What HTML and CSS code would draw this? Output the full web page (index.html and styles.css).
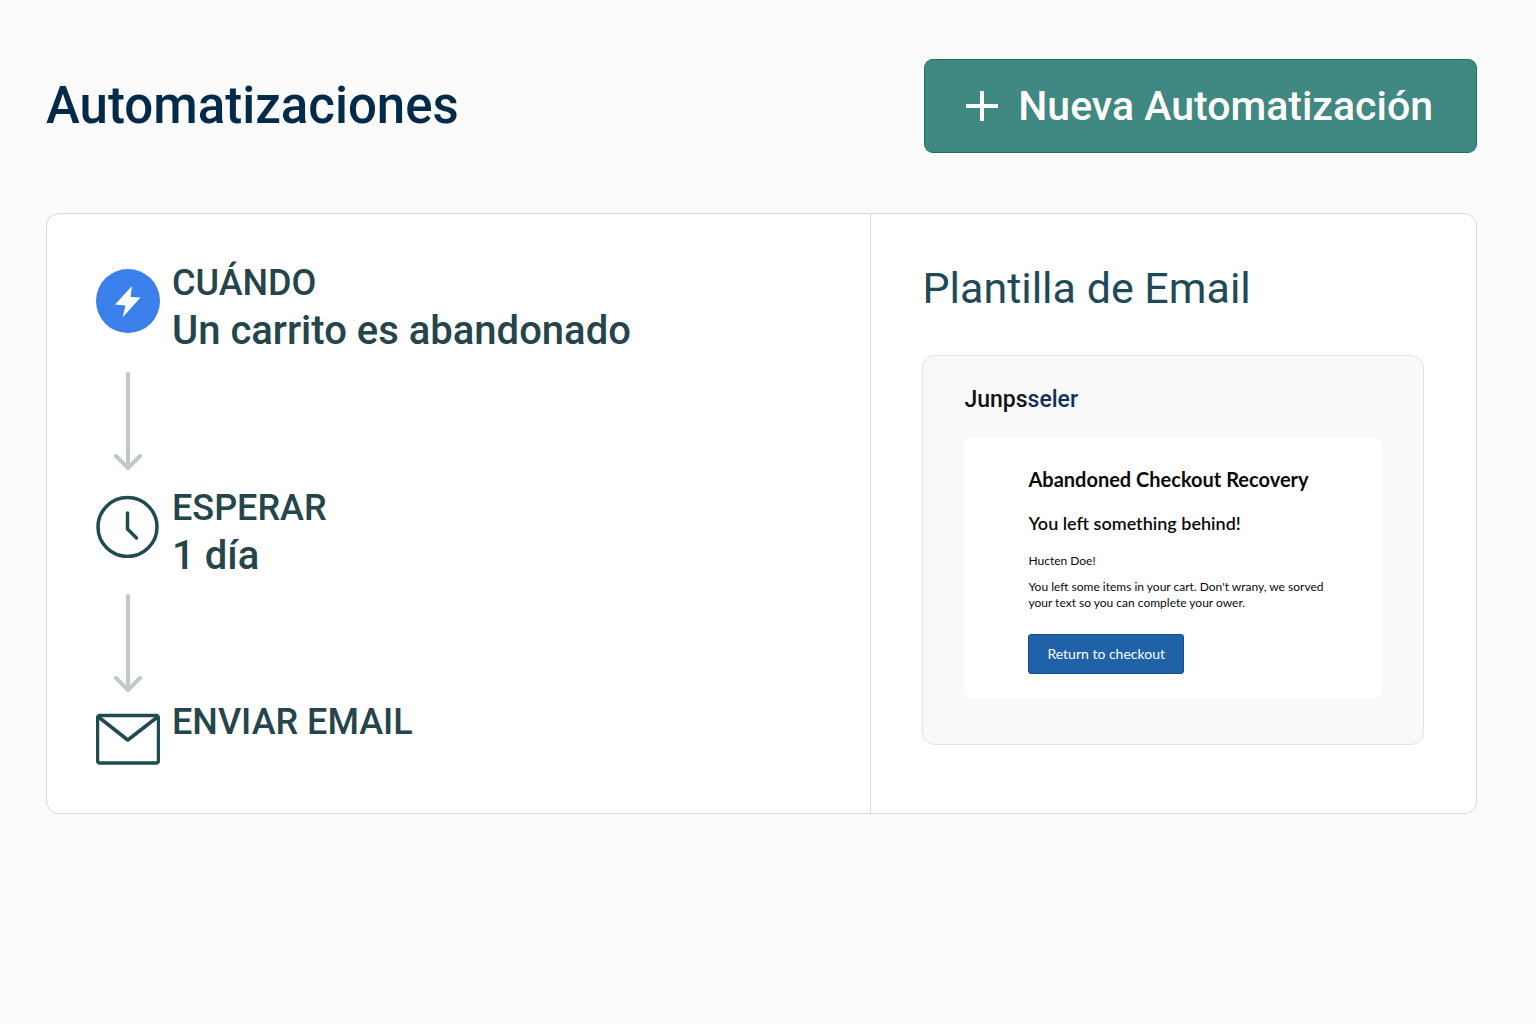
FILE: index.html
```html
<!DOCTYPE html>
<html lang="es">
  <head>
    <meta charset="utf-8" />
    <title>Automatizaciones</title>
    <meta name="viewport" content="width=device-width, initial-scale=1" />
    <link rel="stylesheet" href="styles.css">
  </head>

  <body>
    <header class="page-header">
      <h1>Automatizaciones</h1>
      <button type="button" class="new-button">
        <svg class="plus" viewBox="0 0 32 32" aria-hidden="true">
          <path d="M16 1v30M0 16h32" />
        </svg>
        Nueva Automatización
      </button>
    </header>

    <main class="board">
      <section class="flow">
        <div class="step">
          <svg class="step-icon" viewBox="0 0 64 64" aria-hidden="true">
            <circle class="trigger-bg" cx="32" cy="32" r="32" />
            <path class="trigger-bolt" d="M36 17L19 35.500L29.500 36.500L26.500 48.500L44.500 28.500L34.500 28Z" />
          </svg>
          <div class="step-text">
            <h2>CUÁNDO</h2>
            <p>Un carrito es abandonado</p>
          </div>
        </div>

        <svg class="arrow" viewBox="0 0 64 98" aria-hidden="true">
          <path d="M32 2v93M20 84l12 12 12-12" />
        </svg>

        <div class="step">
          <svg class="step-icon line-icon" viewBox="0 0 64 64" aria-hidden="true">
            <circle cx="31.500" cy="33" r="29.500" />
            <path d="M31.500 19v16l9 9" />
          </svg>
          <div class="step-text">
            <h2>ESPERAR</h2>
            <p>1 día</p>
          </div>
        </div>

        <svg class="arrow arrow-last" viewBox="0 0 64 98" aria-hidden="true">
          <path d="M32 2v93M20 84l12 12 12-12" />
        </svg>

        <div class="step">
          <svg class="step-icon line-icon" viewBox="0 0 64 64" aria-hidden="true">
            <rect x="1.500" y="7.500" width="61" height="47.500" rx="2.500" />
            <path d="M2.500 9L31.800 32L61.500 9" />
          </svg>
          <div class="step-text">
            <h2>ENVIAR EMAIL</h2>
          </div>
        </div>
      </section>

      <section class="template">
        <h2>Plantilla de Email</h2>
        <div class="preview">
          <div class="brand">Junps<span>seler</span></div>
          <article class="mail">
            <h3>Abandoned Checkout Recovery</h3>
            <h4>You left something behind!</h4>
            <p>Hucten Doe!</p>
            <p>
              You left some items in your cart. Don't wrany, we sorved<br />
              your text so you can complete your ower.
            </p>
            <a class="mail-button" href="#">Return to checkout</a>
          </article>
        </div>
      </section>
    </main>
  </body>
</html>
```
FILE: styles.css
```css
* {
  box-sizing: border-box;
}

body {
  margin: 0;
  padding: 59px 59px 59px 46px;
  background: #fbfbfb;
  color: #24454b;
  font-family: Roboto, "Liberation Sans", sans-serif;
}

h1,
h2,
h3,
h4,
p {
  margin: 0;
}

/* Header */

.page-header {
  display: flex;
  align-items: center;
  justify-content: space-between;
  margin-bottom: 60px;
}

.page-header h1 {
  color: #042a4a;
  font-size: 51px;
  font-weight: 500;
  line-height: 60px;
}

.new-button {
  display: flex;
  align-items: center;
  gap: 20px;
  padding: 22px 43px 22px 41px;
  border: 1px solid #1d7268;
  border-radius: 9px;
  background: #408882;
  color: #fff;
  font-family: inherit;
  font-size: 41px;
  font-weight: 500;
  line-height: 48px;
}

.plus {
  width: 32px;
  height: 32px;
  fill: none;
  stroke: #fff;
  stroke-width: 4;
}

/* Board */

.board {
  display: grid;
  grid-template-columns: minmax(0, 824fr) minmax(0, 606fr);
  border: 1px solid #d8dada;
  border-radius: 13px;
  background: #fff;
}

.flow {
  padding: 45px 49px 40px;
}

.step {
  display: flex;
  align-items: flex-start;
  gap: 12px;
}

.step-icon {
  flex: none;
  width: 64px;
  height: 64px;
  margin-top: 10px;
}

.trigger-bg {
  fill: #3b80ea;
}

.trigger-bolt {
  fill: #fff;
}

.line-icon {
  fill: none;
  stroke: #214b52;
  stroke-width: 3.5;
  stroke-linecap: round;
  stroke-linejoin: round;
}

.step h2,
.step p {
  font-weight: 500;
  line-height: 48px;
}

.step h2 {
  font-size: 36px;
}

.step p {
  font-size: 40px;
}

.arrow {
  display: block;
  width: 64px;
  height: 98px;
  margin: 17px 0 14px;
  fill: none;
  stroke: #bfc9ca;
  stroke-width: 4;
  stroke-linecap: round;
  stroke-linejoin: round;
}

.arrow-last {
  margin: 14px 0 6px;
}

/* Email template */

.template {
  padding: 48px 52px 68px 51px;
  border-left: 1px solid #d8dada;
}

.template h2 {
  margin-bottom: 41px;
  color: #20495a;
  font-size: 43px;
  font-weight: 400;
  line-height: 52px;
}

.preview {
  padding: 30px 41px 46px;
  border: 1px solid #e2e3e3;
  border-radius: 13px;
  background: #f9f9f9;
}

.brand {
  margin-bottom: 24px;
  color: #111;
  font-size: 23px;
  font-weight: 500;
  line-height: 28px;
}

.brand span {
  color: #11305f;
}

.mail {
  padding: 28px 64px 24px;
  border-radius: 8px;
  background: #fff;
  color: #0a0a0a;
  font-family: Lato, sans-serif;
}

.mail h3 {
  margin-bottom: 19px;
  font-size: 20px;
  font-weight: 700;
  line-height: 26px;
}

.mail h4 {
  margin-bottom: 18px;
  font-size: 18px;
  font-weight: 600;
  line-height: 24px;
}

.mail p {
  margin-bottom: 10px;
  font-size: 12px;
  line-height: 16px;
  white-space: nowrap;
}

.mail-button {
  display: inline-block;
  margin-top: 13px;
  padding: 9px 18px;
  border: 1px solid #154a94;
  border-radius: 3px;
  background: #2062a8;
  color: #fff;
  font-size: 14px;
  line-height: 20px;
  text-decoration: none;
}
```
